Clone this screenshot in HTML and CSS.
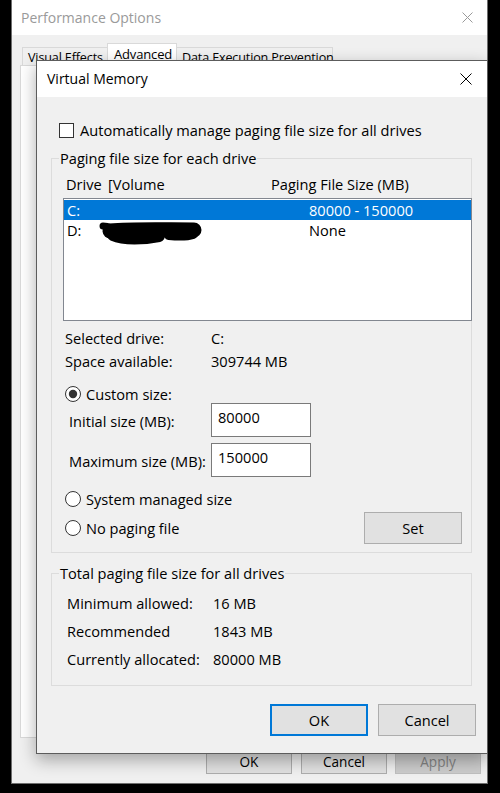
FILE: index.html
```html
<!DOCTYPE html>
<html>
<head>
<meta charset="utf-8">
<title>Virtual Memory</title>
<link rel="stylesheet" href="styles.css">
</head>
<body>
<div class="desktop">
  <div class="window po">
    <div class="titlebar po-titlebar">
      <span class="title">Performance Options</span>
      <svg class="close" width="11" height="11" viewBox="0 0 11 11"><path d="M0.5 0.5L10.5 10.5M10.5 0.5L0.5 10.5"/></svg>
    </div>
    <div class="tabs">
      <div class="tab tab-ve">Visual Effects</div>
      <div class="tab tab-adv selected">Advanced</div>
      <div class="tab tab-dep">Data Execution Prevention</div>
    </div>
    <div class="tab-panel"></div>
    <div class="po-buttons">
      <button class="btn po-btn">OK</button>
      <button class="btn po-btn po-cancel">Cancel</button>
      <button class="btn po-btn po-apply" disabled>Apply</button>
    </div>
  </div>

  <div class="window vm">
    <div class="titlebar vm-titlebar">
      <span class="title">Virtual Memory</span>
      <svg class="close" width="12" height="12" viewBox="0 0 12 12"><path d="M0.5 0.5L11.5 11.5M11.5 0.5L0.5 11.5"/></svg>
    </div>
    <div class="vm-body">
      <div class="check-row">
        <span class="checkbox"></span>
        <span>Automatically manage paging file size for all drives</span>
      </div>

      <fieldset class="group group-drives">
        <legend>Paging file size for each drive</legend>
        <div class="list-header">
          <span>Drive</span><span>[Volume</span><span>Paging File Size (MB)</span>
        </div>
        <div class="listbox">
          <div class="list-row selected"><span>C:</span><span></span><span>80000 - 150000</span></div>
          <div class="list-row">
            <span>D:</span>
            <span class="redact-cell">
              <svg class="redact" width="104" height="20" viewBox="0 0 104 20">
                <path d="M4 6 C 8 6, 10 7, 12 8" stroke-width="7"/>
                <path d="M11 11 C 35 9, 65 10, 95 10" stroke-width="15"/>
                <path d="M14 15 C 25 20, 45 19, 60 16" stroke-width="12"/>
                <path d="M70 15 C 80 16, 88 16, 94 14" stroke-width="10"/>
              </svg>
            </span>
            <span>None</span>
          </div>
        </div>

        <div class="info">
          <span>Selected drive:</span><span>C:</span>
          <span>Space available:</span><span>309744 MB</span>
        </div>

        <div class="radio-row radio-custom">
          <svg class="radio" width="16" height="16" viewBox="0 0 16 16"><circle cx="8" cy="8" r="7.5" class="ring"/><circle cx="8" cy="8" r="4.2" class="dot"/></svg>
          <span>Custom size:</span>
        </div>

        <div class="size-row">
          <span class="size-label">Initial size (MB):</span>
          <div class="textbox">80000</div>
        </div>
        <div class="size-row size-max">
          <span class="size-label">Maximum size (MB):</span>
          <div class="textbox">150000</div>
        </div>

        <div class="radio-row radio-system">
          <svg class="radio" width="16" height="16" viewBox="0 0 16 16"><circle cx="8" cy="8" r="7.5" class="ring"/></svg>
          <span>System managed size</span>
        </div>

        <div class="last-row">
          <div class="radio-row">
            <svg class="radio" width="16" height="16" viewBox="0 0 16 16"><circle cx="8" cy="8" r="7.5" class="ring"/></svg>
            <span>No paging file</span>
          </div>
          <button class="btn set-btn">Set</button>
        </div>
      </fieldset>

      <fieldset class="group group-total">
        <legend>Total paging file size for all drives</legend>
        <div class="totals">
          <span>Minimum allowed:</span><span>16 MB</span>
          <span>Recommended</span><span>1843 MB</span>
          <span>Currently allocated:</span><span>80000 MB</span>
        </div>
      </fieldset>

      <div class="vm-buttons">
        <button class="btn vm-btn default">OK</button>
        <button class="btn vm-btn">Cancel</button>
      </div>
    </div>
  </div>
</div>
</body>
</html>
```

FILE: styles.css
```css
* {
  box-sizing: border-box;
}

html,
body {
  margin: 0;
  padding: 0;
}

body {
  background: #000;
  width: 500px;
  height: 793px;
  overflow: hidden;
  font-family: "Open Sans", "Noto Sans", sans-serif;
  font-size: 14.6px;
  line-height: 20px;
  color: #000;
}

.desktop {
  position: relative;
  width: 500px;
  height: 793px;
}

/* windows on the desktop */
.window {
  position: absolute;
  display: flex;
  flex-direction: column;
  background: #f0f0f0;
}

.titlebar {
  display: flex;
  align-items: center;
  justify-content: space-between;
  background: #fff;
  flex: none;
}

.titlebar .title {
  font-size: 14px;
}

.close {
  display: block;
}

.close path {
  stroke: #000;
  stroke-width: 1;
  fill: none;
}

/* Performance Options (background window) */
.po {
  left: 11px;
  top: 0;
  width: 477px;
  height: 784px;
  border: 1px solid #6e6e6e;
  border-top: none;
}

.po-titlebar {
  height: 35px;
  padding: 0 14px 0 9px;
}

.po-titlebar .title {
  color: #9a9a9a;
  padding-top: 1px;
}

.po .close path {
  stroke: #9a9a9a;
}

.tabs {
  height: 30px;
  flex: none;
  display: flex;
  align-items: flex-end;
  padding-left: 10px;
}

.tab {
  height: 18px;
  line-height: 18px;
  padding: 1px 5px 0;
  border: 1px solid #d9d9d9;
  border-bottom: none;
  background: #f0f0f0;
  white-space: nowrap;
  font-size: 12.6px;
  letter-spacing: -0.15px;
}

.tab-ve {
  width: 86px;
}

.tab-adv {
  width: 70px;
  margin-left: -1px;
}

.tab-dep {
  width: 157px;
  margin-left: -1px;
}

.tab.selected {
  height: 23px;
  padding: 1px 6px 0;
  background: #fff;
  margin-bottom: -1px;
  position: relative;
  z-index: 1;
  font-size: 13px;
}

.tab-panel {
  flex: none;
  height: 673px;
  margin: 0 8px;
  background: #fff;
  border: 1px solid #d9d9d9;
}

.po-buttons {
  flex: none;
  display: flex;
  justify-content: flex-end;
  margin-top: 12px;
  padding-right: 6px;
}

.btn {
  font-family: inherit;
  font-size: 14.6px;
  line-height: 20px;
  color: #000;
  background: #e1e1e1;
  border: 1px solid #adadad;
  padding: 0;
  margin: 0;
  border-radius: 0;
}

.po-btn {
  width: 86px;
  height: 24px;
  font-size: 13.6px;
}

.po-cancel {
  margin-left: 9px;
}

.po-apply {
  margin-left: 8px;
  background: #cccccc;
  border-color: #bfbfbf;
  color: #838383;
}

/* Virtual Memory dialog (foreground window) */
.vm {
  left: 36px;
  top: 60px;
  width: 452px;
  height: 694px;
  border: 1px solid #5c5c5c;
  box-shadow: 0 6px 16px rgba(0, 0, 0, 0.32);
  z-index: 2;
}

.vm-titlebar {
  height: 36px;
  padding: 0 15px 0 10px;
}

.vm-body {
  flex: 1;
  padding: 23px 15px 0 14px;
}

.check-row {
  display: flex;
  align-items: center;
  height: 20px;
  margin-left: 8px;
}

.checkbox {
  width: 15px;
  height: 15px;
  border: 1px solid #333;
  background: #fff;
  margin-right: 6px;
  flex: none;
}

.group {
  margin: 8px 0 0;
  padding: 0;
  border: 1px solid #dcdcdc;
  min-width: 0;
}

.group legend {
  margin-left: 7px;
  padding: 0 1px;
  line-height: 20px;
}

.group-drives {
  padding-bottom: 8px;
}

.list-header {
  display: grid;
  grid-template-columns: 42px 163px auto;
  margin: 6px 0 0 14px;
}

.listbox {
  margin: 4px 0 0 11px;
  width: 409px;
  height: 123px;
  border: 1px solid #828790;
  background: #fff;
  padding: 1px 0 0;
}

.list-row {
  display: grid;
  grid-template-columns: 32px 210px auto;
  height: 20px;
  padding-left: 3px;
}

.list-row.selected {
  background: #0078d7;
  color: #fff;
}

.redact {
  display: block;
  overflow: visible;
}

.redact path {
  fill: none;
  stroke: #000;
  stroke-linecap: round;
  stroke-linejoin: round;
}

.info {
  display: grid;
  grid-template-columns: 146px auto;
  margin: 6px 0 0 13px;
  line-height: 23px;
}

.radio-row {
  display: flex;
  align-items: center;
  height: 20px;
  margin-left: 13px;
}

.radio {
  display: block;
  flex: none;
  margin-right: 5px;
}

.radio .ring {
  fill: #fff;
  stroke: #333;
  stroke-width: 1;
}

.radio .dot {
  fill: #333;
}

.radio-custom {
  height: 19px;
  margin-top: 11px;
}

.size-row {
  display: flex;
  align-items: center;
  height: 34px;
  margin-left: 17px;
}

.size-max {
  margin-top: 6px;
}

.size-label {
  width: 142px;
  padding-top: 2px;
}

.textbox {
  width: 100px;
  height: 34px;
  border: 1px solid #7a7a7a;
  background: #fff;
  padding: 3px 6px 0;
}

.radio-system {
  margin-top: 12px;
}

.last-row {
  display: flex;
  align-items: center;
  justify-content: space-between;
  margin-top: 3px;
  height: 32px;
}

.set-btn {
  width: 98px;
  height: 32px;
  margin-right: 9px;
}

.group-total {
  margin-top: 10px;
  padding-bottom: 12px;
}

.totals {
  display: grid;
  grid-template-columns: 146px auto;
  margin: 6px 0 0 15px;
  line-height: 28px;
}

.vm-buttons {
  display: flex;
  justify-content: flex-end;
  gap: 10px;
  margin: 18px -4px 0 0;
}

.vm-btn {
  width: 98px;
  height: 32px;
}

.vm-btn.default {
  border: 2px solid #0078d7;
}
```
